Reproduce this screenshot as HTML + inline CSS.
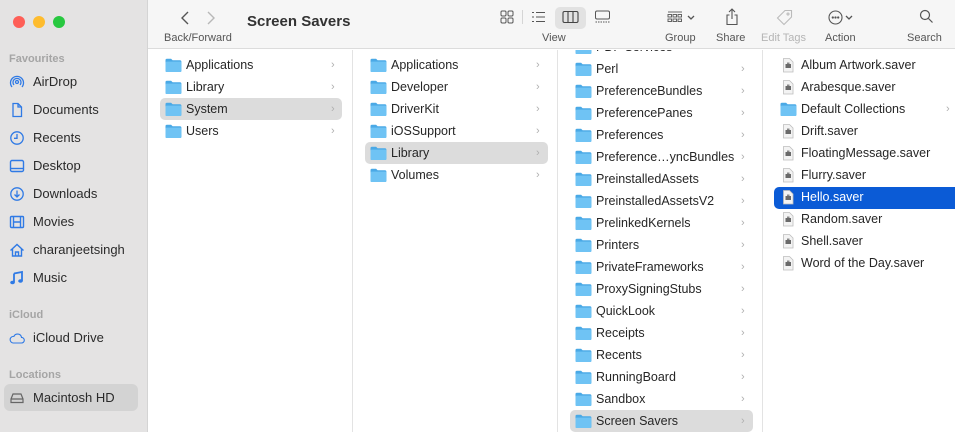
<!DOCTYPE html>
<html><head><meta charset="utf-8"><style>
*{margin:0;padding:0;box-sizing:border-box}
body{width:955px;height:432px;overflow:hidden;font-family:"Liberation Sans",sans-serif;font-size:12.5px;color:#262626;background:#fff;position:relative}
.abs{position:absolute}
#side{left:0;top:0;width:148px;height:432px;background:#e4e3e3;border-right:1px solid #d4d4d4}
#tb{left:148px;top:0;width:807px;height:49px;background:#f6f6f6;border-bottom:1px solid #dcdcdc}
.dot{position:absolute;top:16px;width:12px;height:12px;border-radius:50%}
.lbl{position:absolute;font-size:11px;color:#a5a5a5;font-weight:bold}
.si{position:absolute;left:33px;font-size:13px;color:#2a2a2a;line-height:16px}
.ic{position:absolute;left:9px}
.tl{position:absolute;top:32px;font-size:11px;color:#555}
.tl.dis{color:#b5b5b5}
.col{position:absolute;top:50px;height:382px;border-right:1px solid #e3e3e3;overflow:hidden}
.r{position:absolute;height:22px;line-height:22px;font-size:12.5px;white-space:nowrap}
.r svg{position:absolute;top:4px}
.r .t{position:absolute}
.r .ch{position:absolute;top:0;color:#b0b0b0;font-size:11px}
.sel{background:#dcdcdc;border-radius:5px}
.blue{background:#0b5bd6;border-radius:5px 0 0 5px;color:#fff}
</style></head><body>
<div id="side" class="abs">
<div class="dot" style="left:13px;background:#fe5f57"></div>
<div class="dot" style="left:33px;background:#febc2e"></div>
<div class="dot" style="left:53px;background:#28c840"></div>
<div class="lbl" style="left:9px;top:53px">Favourites</div>
<svg class="ic" style="top:74px" width="16" height="16" viewBox="0 0 16 16" fill="none" stroke="#2f7ae5" stroke-width="1.3"><circle cx="8" cy="8" r="1.5"/><path d="M5 11a4 4 0 1 1 6 0M3 13a6.5 6.5 0 1 1 10 0"/></svg>
<div class="si" style="top:74px">AirDrop</div>
<svg class="ic" style="top:102px" width="16" height="16" viewBox="0 0 16 16" fill="none" stroke="#2f7ae5" stroke-width="1.3"><path d="M4 1.5h5l3.5 3.5v9.5h-8.5z M9 1.5v3.5h3.5"/></svg>
<div class="si" style="top:102px">Documents</div>
<svg class="ic" style="top:130px" width="16" height="16" viewBox="0 0 16 16" fill="none" stroke="#2f7ae5" stroke-width="1.3"><circle cx="8" cy="8" r="6.2"/><path d="M8 4v4.3h-3"/></svg>
<div class="si" style="top:130px">Recents</div>
<svg class="ic" style="top:158px" width="16" height="16" viewBox="0 0 16 16" fill="none" stroke="#2f7ae5" stroke-width="1.4"><rect x="1.5" y="2.5" width="13" height="11" rx="1.5"/><path d="M2 10.5h12"/></svg>
<div class="si" style="top:158px">Desktop</div>
<svg class="ic" style="top:186px" width="16" height="16" viewBox="0 0 16 16" fill="none" stroke="#2f7ae5" stroke-width="1.3"><circle cx="8" cy="8" r="6.2"/><path d="M8 4.5v6M5.5 8.5l2.5 2.5 2.5-2.5"/></svg>
<div class="si" style="top:186px">Downloads</div>
<svg class="ic" style="top:214px" width="16" height="16" viewBox="0 0 16 16" fill="none" stroke="#2f7ae5" stroke-width="1.4"><rect x="1.5" y="2.5" width="13" height="11" rx="1"/><path d="M4.5 2.5v11M11.5 2.5v11M4.5 8h7"/></svg>
<div class="si" style="top:214px">Movies</div>
<svg class="ic" style="top:242px" width="16" height="16" viewBox="0 0 16 16" fill="none" stroke="#2f7ae5" stroke-width="1.4"><path d="M1.5 8.5L8 2.5l6.5 6M3.5 7v7h9V7M6.5 14v-4h3v4"/></svg>
<div class="si" style="top:242px">charanjeetsingh</div>
<svg class="ic" style="top:270px" width="16" height="16" viewBox="0 0 16 16"><path d="M5 3.5l8-1.5v9" fill="none" stroke="#2f7ae5" stroke-width="1.8"/><path d="M5 3.5v9" stroke="#2f7ae5" stroke-width="1.8"/><ellipse cx="3.5" cy="12.5" rx="2.3" ry="1.8" fill="#2f7ae5"/><ellipse cx="11.5" cy="11" rx="2.3" ry="1.8" fill="#2f7ae5"/></svg>
<div class="si" style="top:270px">Music</div>
<div class="lbl" style="left:9px;top:309px">iCloud</div>
<svg class="ic" style="top:330px" width="16" height="16" viewBox="0 0 16 16" fill="none" stroke="#2f7ae5" stroke-width="1.1"><path d="M4 13h8.5a2.8 2.8 0 0 0 0-5.6 4 4 0 0 0-7.6-1A3.3 3.3 0 0 0 4 13z"/></svg>
<div class="si" style="top:330px">iCloud Drive</div>
<div class="lbl" style="left:9px;top:369px">Locations</div>
<div class="abs" style="left:4px;top:384px;width:134px;height:27px;background:#d3d3d3;border-radius:6px"></div>
<svg class="ic" style="top:390px" width="16" height="16" viewBox="0 0 16 16" fill="none" stroke="#666" stroke-width="1.2"><path d="M2 9l2-5h8l2 5v3.5h-12z M2 9h12"/></svg>
<div class="si" style="top:390px">Macintosh HD</div>
</div>

<div id="tb" class="abs">
<svg class="abs" style="left:32px;top:10px" width="10" height="16" viewBox="0 0 10 16" fill="none" stroke="#555" stroke-width="1.4"><path d="M8 2L2 8l6 6"/></svg>
<svg class="abs" style="left:58px;top:10px" width="10" height="16" viewBox="0 0 10 16" fill="none" stroke="#b8b8b8" stroke-width="1.4"><path d="M2 2l6 6-6 6"/></svg>
<div class="abs" style="left:99px;top:13px;font-size:15px;font-weight:bold;color:#333">Screen Savers</div>
<div class="tl" style="left:16px">Back/Forward</div>
<svg class="abs" style="left:352px;top:10px" width="14" height="14" viewBox="0 0 14 14" fill="none" stroke="#555" stroke-width="1"><rect x="1" y="1" width="5" height="5" rx="1.2"/><rect x="8" y="1" width="5" height="5" rx="1.2"/><rect x="1" y="8" width="5" height="5" rx="1.2"/><rect x="8" y="8" width="5" height="5" rx="1.2"/></svg>
<div class="abs" style="left:374px;top:10px;width:1px;height:14px;background:#d5d5d5"></div>
<svg class="abs" style="left:383px;top:10px" width="15" height="14" viewBox="0 0 15 14" fill="none" stroke="#555" stroke-width="1"><path d="M1 2.5h2M1 7h2M1 11.5h2M5 2.5h9M5 7h9M5 11.5h9"/></svg>
<div class="abs" style="left:407px;top:7px;width:31px;height:22px;background:#e2e2e2;border-radius:5px"></div>
<svg class="abs" style="left:414px;top:10px" width="17" height="14" viewBox="0 0 17 14" fill="none" stroke="#444" stroke-width="1.1"><rect x="1" y="1.5" width="15" height="11" rx="1.5"/><path d="M6 1.5v11M11 1.5v11"/></svg>
<svg class="abs" style="left:446px;top:10px" width="17" height="14" viewBox="0 0 17 14" fill="none" stroke="#555" stroke-width="1"><rect x="1.5" y="1" width="14" height="8" rx="1.5"/><path d="M1.5 12h14" stroke-dasharray="1.5 1"/></svg>
<div class="tl" style="left:394px">View</div>
<svg class="abs" style="left:519px;top:11px" width="32" height="12" viewBox="0 0 32 12" fill="none" stroke="#555" stroke-width="0.9"><path d="M1 1h14"/><rect x="1" y="3.5" width="3.5" height="2.5"/><rect x="6" y="3.5" width="3.5" height="2.5"/><rect x="11" y="3.5" width="3.5" height="2.5"/><rect x="1" y="8" width="3.5" height="2.5"/><rect x="6" y="8" width="3.5" height="2.5"/><rect x="11" y="8" width="3.5" height="2.5"/><path d="M21 5l3 3 3-3" stroke-width="1.3"/></svg>
<div class="tl" style="left:517px">Group</div>
<svg class="abs" style="left:577px;top:8px" width="14" height="18" viewBox="0 0 14 18" fill="none" stroke="#555" stroke-width="1.1"><path d="M4.5 7H2v9.5h10V7H9.5M7 1v10M4 4l3-3 3 3"/></svg>
<div class="tl" style="left:568px">Share</div>
<svg class="abs" style="left:628px;top:9px" width="17" height="17" viewBox="0 0 17 17" fill="none" stroke="#bbb" stroke-width="1.1"><path d="M9 1.5h6.5V8L8 15.5 1.5 9z"/><circle cx="12" cy="5" r="1"/></svg>
<div class="tl dis" style="left:613px">Edit Tags</div>
<svg class="abs" style="left:680px;top:10px" width="28" height="15" viewBox="0 0 28 15" fill="none" stroke="#555" stroke-width="1.1"><circle cx="7.5" cy="7.5" r="6.5"/><circle cx="4.8" cy="7.5" r="0.6" fill="#555"/><circle cx="7.5" cy="7.5" r="0.6" fill="#555"/><circle cx="10.2" cy="7.5" r="0.6" fill="#555"/><path d="M18 6l3 3 3-3" stroke-width="1.3"/></svg>
<div class="tl" style="left:677px">Action</div>
<svg class="abs" style="left:771px;top:9px" width="15" height="15" viewBox="0 0 15 15" fill="none" stroke="#555" stroke-width="1.2"><circle cx="6" cy="6" r="4.5"/><path d="M9.5 9.5l4 4"/></svg>
<div class="tl" style="left:759px">Search</div>
</div>

<svg width="0" height="0" style="position:absolute"><defs>
<g id="f"><path d="M0.5 2.2q0-1.4 1.4-1.4h4.2l1.5 1.5h7.3q1.5 0 1.5 1.5v8.7q0 1.5-1.5 1.5H2q-1.5 0-1.5-1.5z" fill="#4aa9e6"/><rect x="0.5" y="3.6" width="15.9" height="10.4" rx="1.3" fill="#6fc3f4"/></g>
<g id="d"><path d="M1.5 0.5h6l3.5 3.5v10h-9.5z" fill="#f3f3f3" stroke="#bdbdbd" stroke-width="0.8"/><rect x="3.5" y="6" width="5.5" height="4" fill="#6a6a6a"/><rect x="5" y="4.5" width="2.5" height="1.5" fill="#888"/></g>
</defs></svg>

<div class="col" style="left:148px;width:205px">
<div class="r sel" style="left:12px;top:48px;width:182px"></div>
<div class="r" style="left:0;top:4px;width:205px"><svg style="left:17px" width="17" height="15"><use href="#f"/></svg><span class="t" style="left:38px">Applications</span><span class="ch" style="left:183px">›</span></div>
<div class="r" style="left:0;top:26px;width:205px"><svg style="left:17px" width="17" height="15"><use href="#f"/></svg><span class="t" style="left:38px">Library</span><span class="ch" style="left:183px">›</span></div>
<div class="r" style="left:0;top:48px;width:205px"><svg style="left:17px" width="17" height="15"><use href="#f"/></svg><span class="t" style="left:38px">System</span><span class="ch" style="left:183px">›</span></div>
<div class="r" style="left:0;top:70px;width:205px"><svg style="left:17px" width="17" height="15"><use href="#f"/></svg><span class="t" style="left:38px">Users</span><span class="ch" style="left:183px">›</span></div>
</div>

<div class="col" style="left:353px;width:205px">
<div class="r sel" style="left:12px;top:92px;width:183px"></div>
<div class="r" style="top:4px;width:205px"><svg style="left:17px" width="17" height="15"><use href="#f"/></svg><span class="t" style="left:38px">Applications</span><span class="ch" style="left:183px">›</span></div>
<div class="r" style="top:26px;width:205px"><svg style="left:17px" width="17" height="15"><use href="#f"/></svg><span class="t" style="left:38px">Developer</span><span class="ch" style="left:183px">›</span></div>
<div class="r" style="top:48px;width:205px"><svg style="left:17px" width="17" height="15"><use href="#f"/></svg><span class="t" style="left:38px">DriverKit</span><span class="ch" style="left:183px">›</span></div>
<div class="r" style="top:70px;width:205px"><svg style="left:17px" width="17" height="15"><use href="#f"/></svg><span class="t" style="left:38px">iOSSupport</span><span class="ch" style="left:183px">›</span></div>
<div class="r" style="top:92px;width:205px"><svg style="left:17px" width="17" height="15"><use href="#f"/></svg><span class="t" style="left:38px">Library</span><span class="ch" style="left:183px">›</span></div>
<div class="r" style="top:114px;width:205px"><svg style="left:17px" width="17" height="15"><use href="#f"/></svg><span class="t" style="left:38px">Volumes</span><span class="ch" style="left:183px">›</span></div>
</div>

<div class="col" style="left:558px;width:205px">
<div class="r sel" style="left:12px;top:360px;width:183px"></div>
<div class="r" style="top:-14px"><svg style="left:17px" width="17" height="15"><use href="#f"/></svg><span class="t" style="left:38px">PDF Services</span><span class="ch" style="left:183px">›</span></div>
<div class="r" style="top:8px"><svg style="left:17px" width="17" height="15"><use href="#f"/></svg><span class="t" style="left:38px">Perl</span><span class="ch" style="left:183px">›</span></div>
<div class="r" style="top:30px"><svg style="left:17px" width="17" height="15"><use href="#f"/></svg><span class="t" style="left:38px">PreferenceBundles</span><span class="ch" style="left:183px">›</span></div>
<div class="r" style="top:52px"><svg style="left:17px" width="17" height="15"><use href="#f"/></svg><span class="t" style="left:38px">PreferencePanes</span><span class="ch" style="left:183px">›</span></div>
<div class="r" style="top:74px"><svg style="left:17px" width="17" height="15"><use href="#f"/></svg><span class="t" style="left:38px">Preferences</span><span class="ch" style="left:183px">›</span></div>
<div class="r" style="top:96px"><svg style="left:17px" width="17" height="15"><use href="#f"/></svg><span class="t" style="left:38px">Preference…yncBundles</span><span class="ch" style="left:183px">›</span></div>
<div class="r" style="top:118px"><svg style="left:17px" width="17" height="15"><use href="#f"/></svg><span class="t" style="left:38px">PreinstalledAssets</span><span class="ch" style="left:183px">›</span></div>
<div class="r" style="top:140px"><svg style="left:17px" width="17" height="15"><use href="#f"/></svg><span class="t" style="left:38px">PreinstalledAssetsV2</span><span class="ch" style="left:183px">›</span></div>
<div class="r" style="top:162px"><svg style="left:17px" width="17" height="15"><use href="#f"/></svg><span class="t" style="left:38px">PrelinkedKernels</span><span class="ch" style="left:183px">›</span></div>
<div class="r" style="top:184px"><svg style="left:17px" width="17" height="15"><use href="#f"/></svg><span class="t" style="left:38px">Printers</span><span class="ch" style="left:183px">›</span></div>
<div class="r" style="top:206px"><svg style="left:17px" width="17" height="15"><use href="#f"/></svg><span class="t" style="left:38px">PrivateFrameworks</span><span class="ch" style="left:183px">›</span></div>
<div class="r" style="top:228px"><svg style="left:17px" width="17" height="15"><use href="#f"/></svg><span class="t" style="left:38px">ProxySigningStubs</span><span class="ch" style="left:183px">›</span></div>
<div class="r" style="top:250px"><svg style="left:17px" width="17" height="15"><use href="#f"/></svg><span class="t" style="left:38px">QuickLook</span><span class="ch" style="left:183px">›</span></div>
<div class="r" style="top:272px"><svg style="left:17px" width="17" height="15"><use href="#f"/></svg><span class="t" style="left:38px">Receipts</span><span class="ch" style="left:183px">›</span></div>
<div class="r" style="top:294px"><svg style="left:17px" width="17" height="15"><use href="#f"/></svg><span class="t" style="left:38px">Recents</span><span class="ch" style="left:183px">›</span></div>
<div class="r" style="top:316px"><svg style="left:17px" width="17" height="15"><use href="#f"/></svg><span class="t" style="left:38px">RunningBoard</span><span class="ch" style="left:183px">›</span></div>
<div class="r" style="top:338px"><svg style="left:17px" width="17" height="15"><use href="#f"/></svg><span class="t" style="left:38px">Sandbox</span><span class="ch" style="left:183px">›</span></div>
<div class="r" style="top:360px"><svg style="left:17px" width="17" height="15"><use href="#f"/></svg><span class="t" style="left:38px">Screen Savers</span><span class="ch" style="left:183px">›</span></div>
</div>

<div class="col" style="left:763px;width:192px;border-right:none">
<div class="r blue" style="left:11px;top:137px;width:181px"></div>
<div class="r" style="top:4px"><svg style="left:19px" width="12" height="15"><use href="#d"/></svg><span class="t" style="left:38px">Album Artwork.saver</span></div>
<div class="r" style="top:26px"><svg style="left:19px" width="12" height="15"><use href="#d"/></svg><span class="t" style="left:38px">Arabesque.saver</span></div>
<div class="r" style="top:48px;width:192px"><svg style="left:17px" width="17" height="15"><use href="#f"/></svg><span class="t" style="left:38px">Default Collections</span><span class="ch" style="left:183px">›</span></div>
<div class="r" style="top:70px"><svg style="left:19px" width="12" height="15"><use href="#d"/></svg><span class="t" style="left:38px">Drift.saver</span></div>
<div class="r" style="top:92px"><svg style="left:19px" width="12" height="15"><use href="#d"/></svg><span class="t" style="left:38px">FloatingMessage.saver</span></div>
<div class="r" style="top:114px"><svg style="left:19px" width="12" height="15"><use href="#d"/></svg><span class="t" style="left:38px">Flurry.saver</span></div>
<div class="r" style="top:136px;color:#fff"><svg style="left:19px" width="12" height="15"><use href="#d"/></svg><span class="t" style="left:38px">Hello.saver</span></div>
<div class="r" style="top:158px"><svg style="left:19px" width="12" height="15"><use href="#d"/></svg><span class="t" style="left:38px">Random.saver</span></div>
<div class="r" style="top:180px"><svg style="left:19px" width="12" height="15"><use href="#d"/></svg><span class="t" style="left:38px">Shell.saver</span></div>
<div class="r" style="top:202px"><svg style="left:19px" width="12" height="15"><use href="#d"/></svg><span class="t" style="left:38px">Word of the Day.saver</span></div>
</div>
</body></html>
